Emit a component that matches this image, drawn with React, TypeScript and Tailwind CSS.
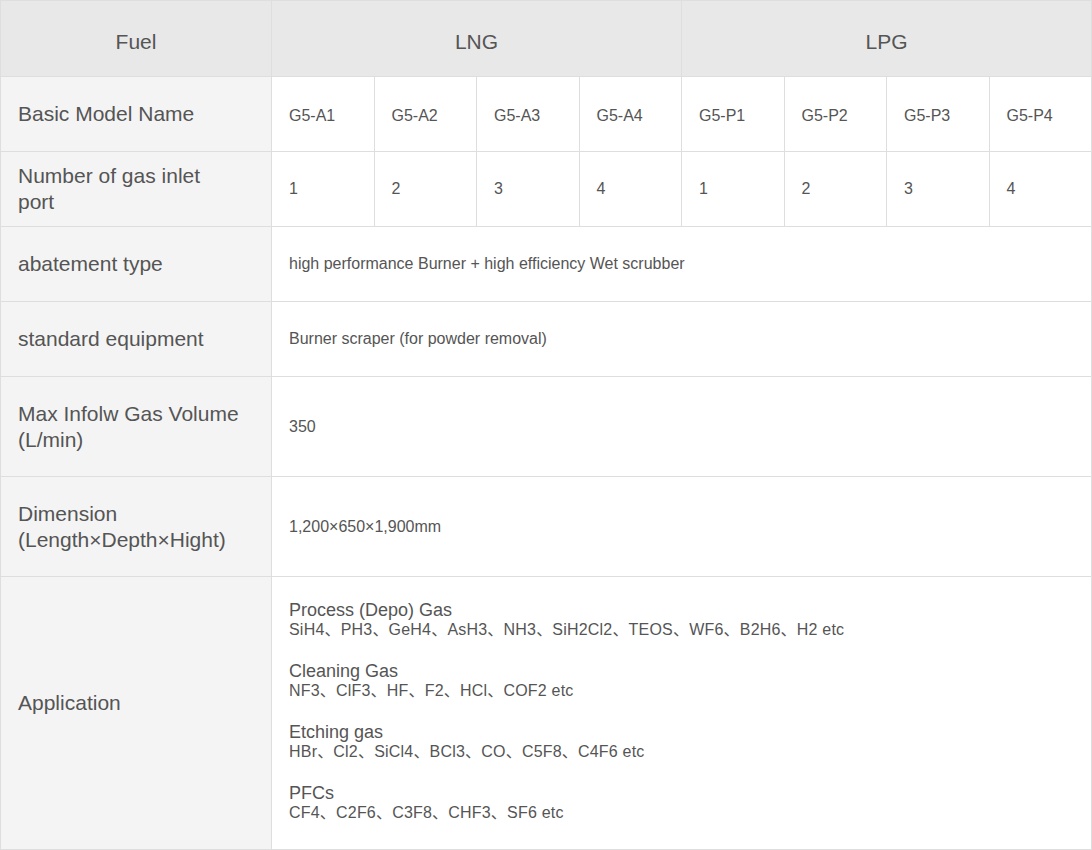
const lng = ["G5-A1", "G5-A2", "G5-A3", "G5-A4"];
const lpg = ["G5-P1", "G5-P2", "G5-P3", "G5-P4"];

const apps = [
  {
    title: "Process (Depo) Gas",
    items: "SiH4、PH3、GeH4、AsH3、NH3、SiH2Cl2、TEOS、WF6、B2H6、H2 etc",
  },
  { title: "Cleaning Gas", items: "NF3、ClF3、HF、F2、HCl、COF2 etc" },
  { title: "Etching gas", items: "HBr、Cl2、SiCl4、BCl3、CO、C5F8、C4F6 etc" },
  { title: "PFCs", items: "CF4、C2F6、C3F8、CHF3、SF6 etc" },
];

const label =
  "border border-[#dedede] bg-[#f4f4f4] pl-[17px] pr-3 text-left align-middle text-[21px] leading-[26px] font-normal text-[#555]";
const cell =
  "border border-[#dedede] bg-white pl-[17px] pr-2 text-left align-middle text-[16px] text-[#555]";

export default function App() {
  return (
    <div className="h-[850px] w-[1092px] bg-white font-['Liberation_Sans',Arial,'Noto_Sans_CJK_SC',sans-serif]">
      <table className="w-[1092px] table-fixed border-collapse">
        <colgroup>
          <col className="w-[271px]" />
          {[...lng, ...lpg].map((m) => (
            <col key={m} />
          ))}
        </colgroup>
        <thead>
          <tr className="h-[76px] bg-[#e8e8e8] text-[21px] text-[#555]">
            <th className="border border-[#dedede] pt-[6px] font-normal">Fuel</th>
            <th colSpan={4} className="border border-[#dedede] pt-[6px] font-normal">
              LNG
            </th>
            <th colSpan={4} className="border border-[#dedede] pt-[6px] font-normal">
              LPG
            </th>
          </tr>
        </thead>
        <tbody>
          <tr className="h-[75px]">
            <th className={label}>Basic Model Name</th>
            {[...lng, ...lpg].map((m) => (
              <td key={m} className={cell + " pt-1"}>
                {m}
              </td>
            ))}
          </tr>
          <tr className="h-[75px]">
            <th className={label}>
              Number of gas inlet
              <br />
              port
            </th>
            {[1, 2, 3, 4, 1, 2, 3, 4].map((n, i) => (
              <td key={i} className={cell}>
                {n}
              </td>
            ))}
          </tr>
          <tr className="h-[75px]">
            <th className={label}>abatement type</th>
            <td colSpan={8} className={cell}>
              high performance Burner + high efficiency Wet scrubber
            </td>
          </tr>
          <tr className="h-[75px]">
            <th className={label}>standard equipment</th>
            <td colSpan={8} className={cell}>
              Burner scraper (for powder removal)
            </td>
          </tr>
          <tr className="h-[100px]">
            <th className={label}>
              Max Infolw Gas Volume
              <br />
              (L/min)
            </th>
            <td colSpan={8} className={cell}>
              350
            </td>
          </tr>
          <tr className="h-[100px]">
            <th className={label}>
              Dimension
              <br />
              (Length×Depth×Hight)
            </th>
            <td colSpan={8} className={cell}>
              1,200×650×1,900mm
            </td>
          </tr>
          <tr className="h-[273px]">
            <th className={label + " pb-5"}>Application</th>
            <td colSpan={8} className={cell + " pb-1"}>
              <div className="flex flex-col gap-[21px]">
                {apps.map((a) => (
                  <div key={a.title}>
                    <div className="text-[18px] leading-[20px]">{a.title}</div>
                    <div className="text-[16px] leading-[20px] tracking-[0.2px]">{a.items}</div>
                  </div>
                ))}
              </div>
            </td>
          </tr>
        </tbody>
      </table>
    </div>
  );
}
